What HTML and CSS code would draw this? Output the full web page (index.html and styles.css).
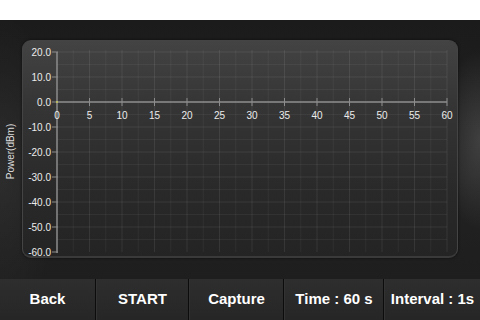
FILE: index.html
```html
<!DOCTYPE html>
<html lang="en">
<head>
    <meta charset="UTF-8">
    <meta name="viewport" content="width=device-width, initial-scale=1.0">
    <title>Power Meter</title>
    <link rel="stylesheet" href="styles.css">
</head>
<body>
    <!-- Status bar -->
    <div class="statusbar"></div>

    <!-- Chart area -->
    <div class="main">
        <div class="ytitle"><span>Power(dBm)</span></div>
        <div class="panel">
            <svg id="chart" width="436" height="218" viewBox="0 0 436 218"></svg>
        </div>
    </div>

    <!-- Toolbar -->
    <div class="toolbar">
        <button>Back</button>
        <button>START</button>
        <button>Capture</button>
        <button>Time : 60 s</button>
        <button>Interval : 1s</button>
    </div>

    <script>
        // Chart setup
        const svg = document.getElementById('chart');
        const NS = 'http://www.w3.org/2000/svg';
        const x0 = 35, yTop = 12, pxPerSec = 6.5, pxPerDb = 2.5;
        const xp = t => x0 + t * pxPerSec;
        const yp = v => yTop + (20 - v) * pxPerDb;

        function add(tag, attrs, text) {
            const el = document.createElementNS(NS, tag);
            for (const k in attrs) el.setAttribute(k, attrs[k]);
            if (text !== undefined) el.textContent = text;
            svg.appendChild(el);
            return el;
        }

        // grid
        for (let t = 2.5; t <= 60; t += 2.5) {
            add('line', { x1: xp(t), y1: yp(20) - 2, x2: xp(t), y2: yp(-60), class: t % 5 === 0 ? 'grid major' : 'grid' });
        }
        for (let v = 20; v >= -55; v -= 5) {
            add('line', { x1: xp(0), y1: yp(v), x2: xp(60), y2: yp(v), class: v % 10 === 0 ? 'grid major' : 'grid' });
        }

        // axes
        add('line', { x1: xp(0), y1: yp(20), x2: xp(0), y2: yp(-60) + 1, class: 'axis' });
        add('line', { x1: xp(0), y1: yp(0), x2: xp(60), y2: yp(0), class: 'axis' });

        // y ticks + labels
        for (let v = 20; v >= -60; v -= 10) {
            add('line', { x1: x0 - 5, y1: yp(v), x2: x0 + 1, y2: yp(v), class: 'tick' });
            add('text', { x: x0 - 6, y: yp(v) + 3.5, 'text-anchor': 'end', class: 'label' }, v.toFixed(1));
        }

        // x ticks + labels
        for (let t = 0; t <= 60; t += 5) {
            if (t > 0) add('line', { x1: xp(t), y1: yp(0) - 4, x2: xp(t), y2: yp(0) + 4, class: 'tick' });
            add('text', { x: xp(t), y: yp(0) + 17, 'text-anchor': 'middle', class: 'label' }, t);
        }

        add('circle', { cx: xp(0), cy: yp(0), r: 1, fill: '#c8c85a' });
    </script>
</body>
</html>
```

FILE: styles.css
```css
* {
    margin: 0;
    padding: 0;
    box-sizing: border-box;
}
body {
    width: 480px;
    height: 320px;
    overflow: hidden;
    font-family: 'Liberation Sans', Arial, sans-serif;
    background: #fff;
}

/* Status bar */
.statusbar {
    height: 20px;
    background: #fff;
}

/* Chart area */
.main {
    height: 259px;
    display: flex;
    padding: 20px 22px 21px 0;
    background:
        radial-gradient(ellipse 40px 90px at 480px 120px, rgba(255, 255, 255, 0.14), rgba(255, 255, 255, 0) 100%),
        radial-gradient(ellipse 60px 160px at 0 150px, rgba(255, 255, 255, 0.05), rgba(255, 255, 255, 0) 100%),
        linear-gradient(#1b1b1b, #222 60%, #1e1e1e);
}
.ytitle {
    width: 22px;
    display: flex;
    align-items: center;
    justify-content: center;
}
.ytitle span {
    transform: rotate(-90deg);
    white-space: nowrap;
    font-size: 10px;
    color: #dcdcdc;
    margin-top: 4px;
}
.panel {
    flex: 1;
    border-radius: 9px;
    border: 1px solid #444;
    border-bottom: 2px solid #3a3a3a;
    background: linear-gradient(#434343, #353535 30%, #292929 70%, #242424);
    box-shadow: 0 0 3px rgba(0, 0, 0, 0.6);
    overflow: hidden;
}
.panel svg {
    display: block;
    margin: -1px 0 0 -1px;
}
.grid {
    stroke: rgba(255, 255, 255, 0.05);
    stroke-width: 1;
}
.grid.major {
    stroke: rgba(255, 255, 255, 0.08);
}
.axis {
    stroke: #8c8c8c;
    stroke-width: 1.5;
}
.tick {
    stroke: #8c8c8c;
    stroke-width: 1;
}
.label {
    font-family: 'Liberation Sans', Arial, sans-serif;
    font-size: 10px;
    fill: #ececec;
}

/* Toolbar */
.toolbar {
    height: 41px;
    display: grid;
    grid-template-columns: 95px 92px 94px 99px 1fr;
    gap: 1px;
    background: #0c0c0c;
}
.toolbar button {
    border: none;
    border-left: 1px solid #333;
    padding-bottom: 3px;
    background: linear-gradient(#2e2e2e, #262626);
    color: #fff;
    font-family: 'Liberation Sans', Arial, sans-serif;
    font-weight: bold;
    font-size: 15px;
    cursor: pointer;
}
.toolbar button:first-child {
    border-left: none;
}
```
